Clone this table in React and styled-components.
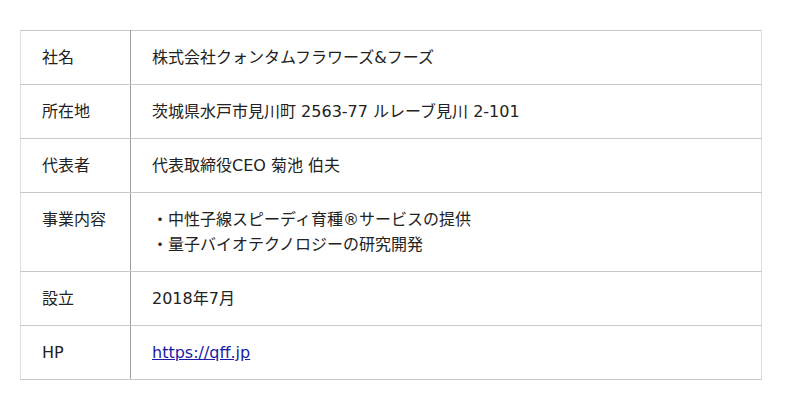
import styled, { createGlobalStyle } from 'styled-components';

const GlobalStyle = createGlobalStyle`
  body {
    margin: 0;
    background: #fff;
    font-family: "DejaVu Sans", "Noto Sans CJK JP", sans-serif;
    color: #222;
  }
`;

const rows = [
  { label: '社名', value: ['株式会社クォンタムフラワーズ&フーズ'] },
  { label: '所在地', value: ['茨城県水戸市見川町 2563-77 ルレーブ見川 2-101'] },
  { label: '代表者', value: ['代表取締役CEO 菊池 伯夫'] },
  {
    label: '事業内容',
    value: ['・中性子線スピーディ育種®サービスの提供', '・量子バイオテクノロジーの研究開発'],
  },
  { label: '設立', value: ['2018年7月'] },
  { label: 'HP', link: 'https://qff.jp' },
];

export default function App() {
  return (
    <>
      <GlobalStyle />
      <Page>
        <InfoTable>
          <tbody>
            {rows.map((row) => (
              <tr key={row.label}>
                <LabelCell>{row.label}</LabelCell>
                <ValueCell>
                  {row.link ? (
                    <Link href={row.link}>{row.link}</Link>
                  ) : (
                    row.value.map((line) => <Line key={line}>{line}</Line>)
                  )}
                </ValueCell>
              </tr>
            ))}
          </tbody>
        </InfoTable>
      </Page>
    </>
  );
}

const Page = styled.div`
  padding: 30px 20px;
`;

const InfoTable = styled.table`
  width: 742px;
  border-collapse: collapse;
  border: 1px solid #dedede;
  font-size: 16px;
  line-height: 25px;
`;

const Cell = styled.td`
  padding: 14px 21px 14px 21px;
  border-top: 1px solid #c8c8c8;
  border-bottom: 1px solid #c8c8c8;
  vertical-align: top;
  text-align: left;
`;

const LabelCell = styled(Cell)`
  width: 110px;
  box-sizing: border-box;
  border-right: 1px solid #9e9e9e;
  border-left: 1px solid #dedede;
`;

const ValueCell = styled(Cell)`
  border-right: 1px solid #dedede;
`;

const Line = styled.div``;

const Link = styled.a`
  color: #1a1aa6;
  text-decoration: underline;
`;
